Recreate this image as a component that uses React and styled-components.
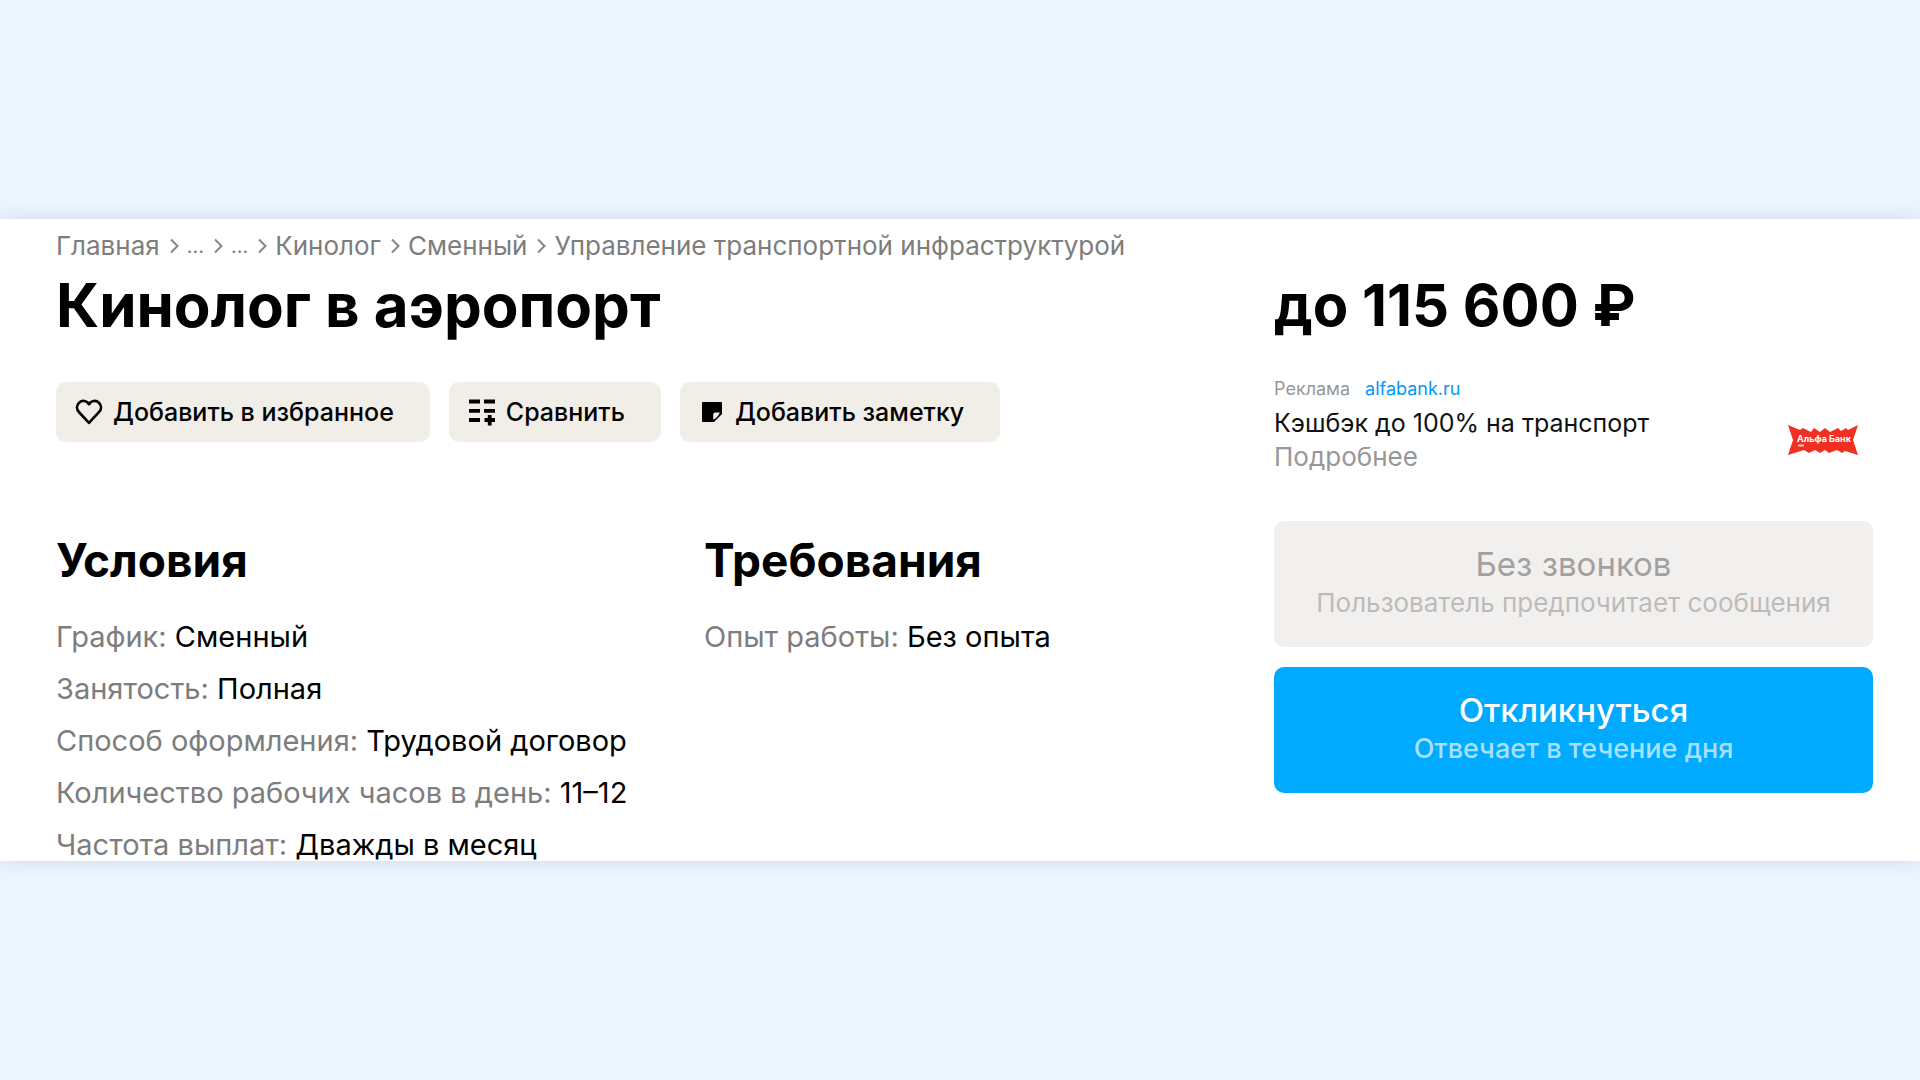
import React from 'react';
import styled, { createGlobalStyle } from 'styled-components';

const GlobalStyle = createGlobalStyle`
  * {
    box-sizing: border-box;
  }

  body {
    margin: 0;
    background-color: #edf5ff;
    color: #000;
    font-family: Inter, Roboto, sans-serif;
  }

  h1, h2, p, ul, ol {
    margin: 0;
    padding: 0;
  }

  ul, ol {
    list-style: none;
  }
`;

const Page = styled.div`
  min-height: 100vh;
  display: flex;
  flex-direction: column;
  justify-content: center;
`;

const Panel = styled.main`
  display: flex;
  justify-content: space-between;
  gap: 40px;
  padding: 11px 47px 0 56px;
  background-color: #fff;
  box-shadow: 0 0 20px rgba(80, 100, 140, 0.2);
`;

const Info = styled.div`
  flex: 1;
  min-width: 0;
`;

const Breadcrumbs = styled.ol`
  display: flex;
  align-items: center;
  font-size: 26px;
  line-height: 32px;
`;

const Crumb = styled.li`
  display: flex;
  align-items: center;
  gap: 10px;
  margin-right: 8px;
  white-space: nowrap;
`;

const CrumbLink = styled.a`
  color: #7d7d7d;
  font-size: ${props => (props.$collapsed ? '20px' : '26px')};
  text-decoration: none;

  &:hover {
    color: #000;
  }
`;

const Title = styled.h1`
  margin-top: 7px;
  font-size: 60px;
  line-height: 72px;
  font-weight: 700;
  white-space: nowrap;
`;

const Actions = styled.div`
  display: flex;
  gap: 19px;
  margin-top: 41px;
`;

const ActionButton = styled.button`
  display: flex;
  align-items: center;
  gap: 10px;
  height: 60px;
  padding: 0 36px 0 19px;
  border: none;
  border-radius: 10px;
  background-color: #f1eee8;
  color: #000;
  font-family: inherit;
  font-size: 25px;
  font-weight: 500;
  white-space: nowrap;
  cursor: pointer;
`;

const Columns = styled.div`
  display: grid;
  grid-template-columns: 648px 1fr;
  margin-top: 90px;
`;

const SectionTitle = styled.h2`
  font-size: 46px;
  line-height: 56px;
  font-weight: 700;
`;

const Params = styled.ul`
  display: flex;
  flex-direction: column;
  gap: 20px;
  margin-top: 33px;
  font-size: 29px;
  line-height: 32px;
  white-space: nowrap;
`;

const ParamName = styled.span`
  color: #7d7d7d;
`;

const Side = styled.aside`
  flex: 0 0 599px;
  padding-top: 39px;
`;

const Price = styled.p`
  font-size: 58px;
  line-height: 72px;
  font-weight: 700;
  white-space: nowrap;
`;

const Ad = styled.div`
  margin-top: 36px;
`;

const AdBody = styled.div`
  display: flex;
  align-items: center;
  justify-content: space-between;
  margin-top: 5px;
  padding-right: 14px;
`;

const AdSource = styled.p`
  display: flex;
  gap: 15px;
  font-size: 18px;
  line-height: 24px;
  color: #979797;
`;

const AdLink = styled.a`
  color: #0099f7;
  text-decoration: none;
`;

const AdText = styled.p`
  font-size: 25px;
  line-height: 34px;
  color: #111;
`;

const AdMore = styled.a`
  display: block;
  font-size: 26px;
  line-height: 34px;
  color: #979797;
  text-decoration: none;
`;

const Contacts = styled.div`
  display: flex;
  flex-direction: column;
  gap: 20px;
  margin-top: 47px;
`;

const ContactButton = styled.button`
  display: flex;
  flex-direction: column;
  align-items: center;
  padding: 23px 16px 25px;
  border: none;
  border-radius: 10px;
  background-color: ${props => (props.$primary ? '#00aaff' : '#f2f0ef')};
  color: ${props => (props.$primary ? '#fff' : '#a3a1a0')};
  font-family: inherit;
  font-size: 33px;
  font-weight: ${props => (props.$primary ? 500 : 400)};
  line-height: 40px;
  white-space: nowrap;
  cursor: ${props => (props.disabled ? 'default' : 'pointer')};
`;

const ContactHint = styled.span`
  color: ${props => (props.$primary ? '#a6e1ff' : '#bdbbba')};
  font-size: ${props => (props.$primary ? '27px' : '26px')};
  line-height: 38px;
`;

const crumbs = ['Главная', '...', '...', 'Кинолог', 'Сменный', 'Управление транспортной инфраструктурой'];

const conditions = [
  { name: 'График', value: 'Сменный' },
  { name: 'Занятость', value: 'Полная' },
  { name: 'Способ оформления', value: 'Трудовой договор' },
  { name: 'Количество рабочих часов в день', value: '11–12' },
  { name: 'Частота выплат', value: 'Дважды в месяц' },
];

const requirements = [{ name: 'Опыт работы', value: 'Без опыта' }];

const Chevron = () => (
  <svg width="9" height="16" viewBox="0 0 9 16" fill="none" stroke="#858585" strokeWidth="2" aria-hidden="true">
    <path d="M1 1.5L7.5 8L1 14.5" />
  </svg>
);

const HeartIcon = () => (
  <svg width="28" height="26" viewBox="0 0 28 26" fill="none" stroke="#000" strokeWidth="2.7" strokeLinejoin="round" aria-hidden="true">
    <path d="M14 5.2C11.8 1.4 7 1 4.1 3.7C1.3 6.4 1.4 10.4 4.1 13.2L14 23.8L23.9 13.2C26.6 10.4 26.7 6.4 23.9 3.7C21 1 16.2 1.4 14 5.2Z" />
  </svg>
);

const CompareIcon = () => (
  <svg width="28" height="28" viewBox="0 0 28 28" stroke="#000" strokeWidth="3.8" aria-hidden="true">
    <path d="M1 3.5H12M16 3.5H27M1 12.8H12M16 12.8H27M1 22H12M16.5 22H27M21.7 17V27.5" />
  </svg>
);

const NoteIcon = () => (
  <svg width="26" height="22" viewBox="0 0 26 22" aria-hidden="true">
    <path d="M4 1H22Q23 1 23 2V13L15 21H4Q3 21 3 20V2Q3 1 4 1Z" fill="#000" />
    <path d="M14.2 18.5V13.5Q14.2 11.5 16.2 11.5H20.8Q20 14 18 16Q16 18 14.2 18.5Z" fill="#f1eee8" />
  </svg>
);

const AlfaLogo = () => (
  <svg width="72" height="32" viewBox="0 0 72 32" role="img" aria-label="Альфа Банк">
    <path
      d="M1 1L13 6L16 4L24 8L27 4L33 8L38 4L43 8L51 4L54 7L59 4L61 6L71 1L66 16L71 31L58 27L55 29L50 26L42 29L38 26L33 29L28 26L22 29L17 26L1 31L6 16Z"
      fill="#ef3124"
    />
    <text x="37" y="18" textAnchor="middle" fontFamily="Inter, sans-serif" fontSize="9" fontWeight="700" fill="#fff">
      Альфа Банк
    </text>
    <path d="M11 21.5H17" stroke="#ffc4bf" strokeWidth="2" />
  </svg>
);

const ParamList = ({ title, items }) => (
  <section>
    <SectionTitle>{title}</SectionTitle>
    <Params>
      {items.map(item => (
        <li key={item.name}>
          <ParamName>{item.name}:</ParamName> {item.value}
        </li>
      ))}
    </Params>
  </section>
);

function App() {
  return (
    <>
      <GlobalStyle />
      <Page>
        <Panel>
          <Info>
            <nav>
              <Breadcrumbs>
                {crumbs.map((label, i) => (
                  <Crumb key={i}>
                    <CrumbLink href="#" $collapsed={label === '...'}>{label}</CrumbLink>
                    {i < crumbs.length - 1 && <Chevron />}
                  </Crumb>
                ))}
              </Breadcrumbs>
            </nav>
            <Title>Кинолог в аэропорт</Title>
            <Actions>
              <ActionButton type="button"><HeartIcon />Добавить в избранное</ActionButton>
              <ActionButton type="button"><CompareIcon />Сравнить</ActionButton>
              <ActionButton type="button"><NoteIcon />Добавить заметку</ActionButton>
            </Actions>
            <Columns>
              <ParamList title="Условия" items={conditions} />
              <ParamList title="Требования" items={requirements} />
            </Columns>
          </Info>

          <Side>
            <Price>до 115 600 ₽</Price>
            <Ad>
              <AdSource>
                Реклама <AdLink href="#">alfabank.ru</AdLink>
              </AdSource>
              <AdBody>
                <div>
                  <AdText>Кэшбэк до 100% на транспорт</AdText>
                  <AdMore href="#">Подробнее</AdMore>
                </div>
                <AlfaLogo />
              </AdBody>
            </Ad>
            <Contacts>
              <ContactButton type="button" disabled>
                Без звонков
                <ContactHint>Пользователь предпочитает сообщения</ContactHint>
              </ContactButton>
              <ContactButton type="button" $primary>
                Откликнуться
                <ContactHint $primary>Отвечает в течение дня</ContactHint>
              </ContactButton>
            </Contacts>
          </Side>
        </Panel>
      </Page>
    </>
  );
}

export default App;
